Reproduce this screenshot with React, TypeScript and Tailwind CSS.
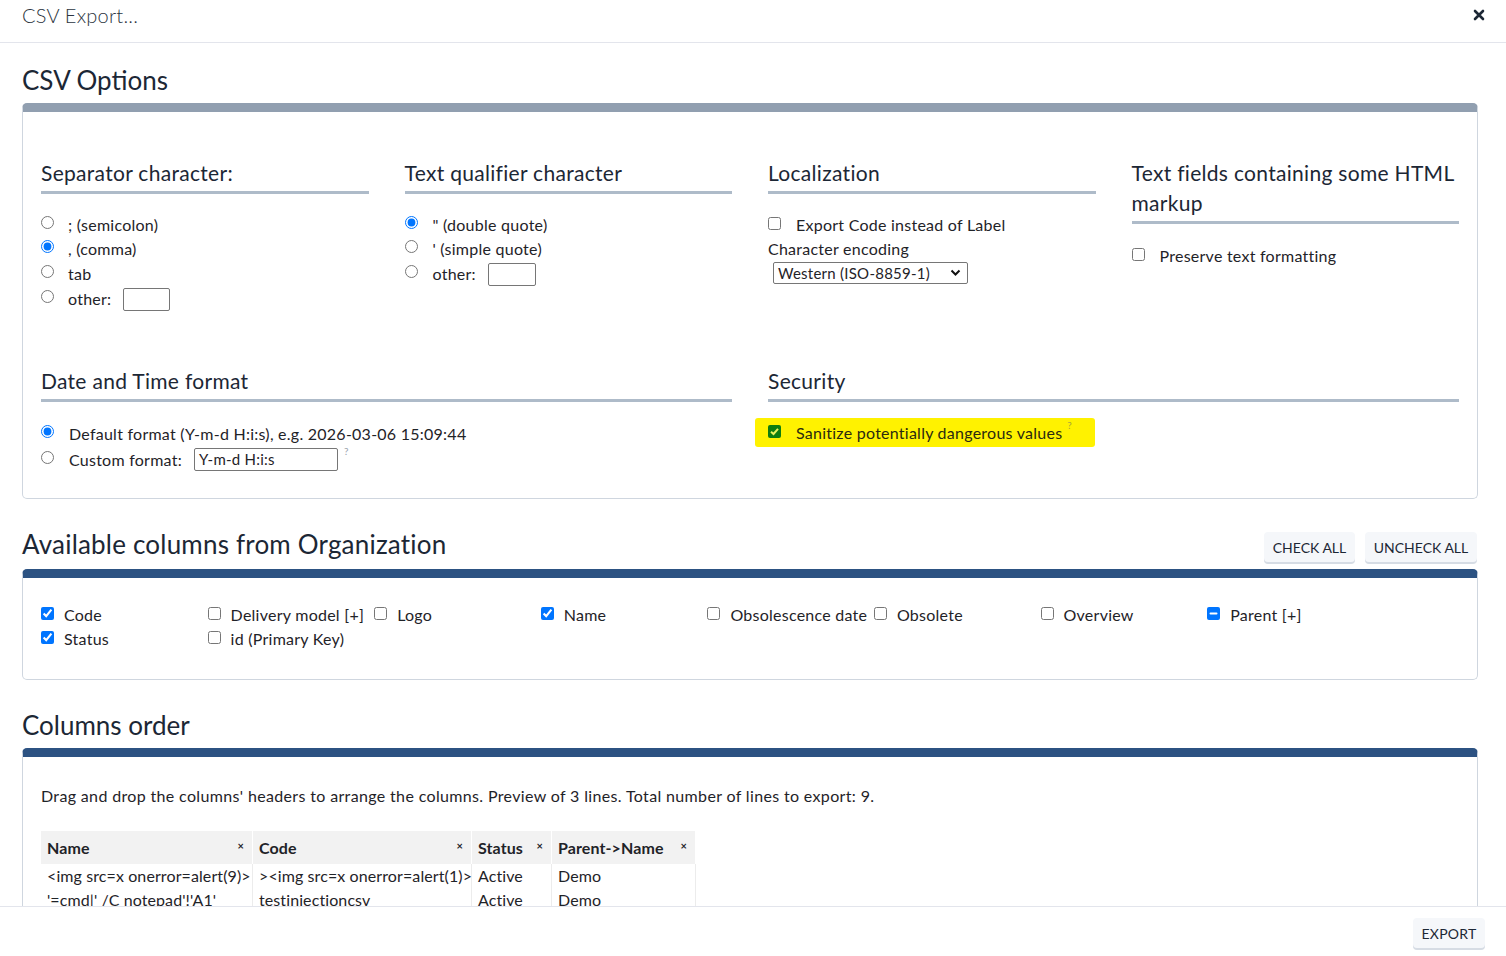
import React, { useEffect, useRef } from "react";

const FONT = { fontFamily: "Lato, 'Open Sans', sans-serif" };

function Radio({ checked }: { checked?: boolean }) {
  return (
    <input
      type="radio"
      defaultChecked={checked}
      className="m-0 w-[13px] h-[13px] mb-[5px] shrink-0"
      readOnly
    />
  );
}

function Check({ checked, indeterminate }: { checked?: boolean; indeterminate?: boolean }) {
  const ref = useRef<HTMLInputElement>(null);
  useEffect(() => {
    if (ref.current && indeterminate) ref.current.indeterminate = true;
  }, [indeterminate]);
  return (
    <input
      ref={ref}
      type="checkbox"
      defaultChecked={checked}
      className="m-0 w-[13px] h-[13px] mb-[3px] shrink-0"
    />
  );
}

function Heading({ children }: { children: React.ReactNode }) {
  return (
    <div className="text-[21px] tracking-[0.3px] leading-[30px] pb-[3px] border-b-[3px] border-[#aebbc9] text-[#1c2735]">
      {children}
    </div>
  );
}

function TextBox({ w, value }: { w: string; value?: string }) {
  return (
    <span
      className={`inline-flex items-center h-[23px] border border-[#767676] rounded-[2px] px-[4px] text-[15px] ${w}`}
    >
      {value}
    </span>
  );
}

const columns: { label: string; checked?: boolean; ind?: boolean }[] = [
  { label: "Code", checked: true },
  { label: "Delivery model [+]" },
  { label: "Logo" },
  { label: "Name", checked: true },
  { label: "Obsolescence date" },
  { label: "Obsolete" },
  { label: "Overview" },
  { label: "Parent [+]", ind: true },
  { label: "Status", checked: true },
  { label: "id (Primary Key)" },
];

function HeadCell({ label, w }: { label: string; w: string }) {
  return (
    <div className={`${w} h-[33px] flex items-center justify-between px-[6px] bg-[#f2f2f2] border-r border-white font-bold`}>
      <span>{label}</span>
      <span className="text-[11px] font-bold mr-[2px] mb-[2px]">×</span>
    </div>
  );
}

export default function App() {
  return (
    <div className="h-screen flex flex-col bg-white text-[#1f2328] text-[16px] tracking-[0.25px] overflow-hidden" style={FONT}>
      <header className="h-[43px] shrink-0 border-b border-[#e3e5ec] flex items-start justify-between pl-[22px] pr-[21px] pt-[2px]">
        <span className="text-[20px] leading-[26px] font-light text-[#2b3440]">CSV Export...</span>
        <svg width="12" height="12" viewBox="0 0 12 12" className="mt-[7px]">
          <path d="M2 2 L10 10 M10 2 L2 10" stroke="#1c2735" strokeWidth="2.6" strokeLinecap="round" />
        </svg>
      </header>

      <main className="flex-1 overflow-hidden pl-[22px] pr-[28px]">
        <h2 className="text-[26px] leading-[34px] tracking-[0px] mt-[20px] mb-[6px] text-[#1c2735]">CSV Options</h2>

        <section className="border border-[#cfd6df] border-t-[9px] border-t-[#919fb0] rounded-[5px] pt-[46px] pb-[25px] px-[18px]">
          <div className="grid grid-cols-4 gap-x-[36px]">
            <div className="h-[208px]">
              <Heading>Separator character:</Heading>
              <div className="mt-[19px]">
                <label className="flex items-center gap-[14px] h-[24px]"><Radio /> ; (semicolon)</label>
                <label className="flex items-center gap-[14px] h-[24px]"><Radio checked /> , (comma)</label>
                <label className="flex items-center gap-[14px] h-[25px]"><Radio /> tab</label>
                <label className="flex items-center gap-[14px] h-[26px]"><Radio /> <span className="flex items-center gap-[12px]">other: <TextBox w="w-[47px]" /></span></label>
              </div>
            </div>
            <div className="h-[208px]">
              <Heading>Text qualifier character</Heading>
              <div className="mt-[19px]">
                <label className="flex items-center gap-[15px] h-[24px]"><Radio checked /> " (double quote)</label>
                <label className="flex items-center gap-[15px] h-[24px]"><Radio /> ' (simple quote)</label>
                <label className="flex items-center gap-[15px] h-[26px]"><Radio /> <span className="flex items-center gap-[12px]">other: <TextBox w="w-[48px]" /></span></label>
              </div>
            </div>
            <div className="h-[208px]">
              <Heading>Localization</Heading>
              <div className="mt-[19px]">
                <label className="flex items-center gap-[15px] h-[24px]"><Check /> Export Code instead of Label</label>
                <div className="h-[23px] leading-[23px]">Character encoding</div>
                <div className="ml-[5px] mt-[2px] w-[195px] h-[22px] border border-[#767676] rounded-[2px] flex items-center justify-between pl-[4px] pr-[6px] text-[15px]">
                  <span>Western (ISO-8859-1)</span>
                  <svg width="11" height="8" viewBox="0 0 11 8">
                    <path d="M1.5 1.5 L5.5 5.5 L9.5 1.5" stroke="#111" strokeWidth="2" fill="none" />
                  </svg>
                </div>
              </div>
            </div>
            <div className="h-[208px]">
              <Heading>Text fields containing some HTML markup</Heading>
              <div className="mt-[20px]">
                <label className="flex items-center gap-[15px] h-[24px]"><Check /> Preserve text formatting</label>
              </div>
            </div>

            <div className="col-span-2">
              <Heading>Date and Time format</Heading>
              <div className="mt-[20px]">
                <label className="flex items-center gap-[15px] h-[24px]"><Radio checked /> Default format (Y-m-d H:i:s), e.g. 2026-03-06 15:09:44</label>
                <label className="flex items-center gap-[15px] h-[27px]">
                  <Radio />
                  <span className="flex items-center gap-[12px]">Custom format: <TextBox w="w-[144px]" value="Y-m-d H:i:s" /></span>
                  <sup className="text-[10px] text-[#9aa3ad] -ml-[9px] -mt-[8px]">?</sup>
                </label>
              </div>
            </div>
            <div className="col-span-2">
              <Heading>Security</Heading>
              <div className="mt-[16px]">
                <div className="-ml-[13px] w-[340px] h-[29px] bg-[#fff200] rounded-[3px] flex items-center gap-[15px] pl-[13px]">
                  <span className="w-[13px] h-[13px] rounded-[2px] bg-[#0e7d10] flex items-center justify-center mb-[3px]">
                    <svg width="11" height="11" viewBox="0 0 11 11">
                      <path d="M2 5.8 L4.5 8 L9 2.8" stroke="#e9f25c" strokeWidth="2" fill="none" />
                    </svg>
                  </span>
                  <span className="text-[#2a2a10]">Sanitize potentially dangerous values</span>
                  <sup className="text-[10px] text-[#a9a83a] -ml-[10px] -mt-[6px]">?</sup>
                </div>
              </div>
            </div>
          </div>
        </section>

        <div className="flex items-center justify-between h-[40px] mt-[25px] mb-[5px] pr-[1px]">
          <h2 className="text-[26px] leading-[34px] tracking-[0.2px] text-[#1c2735]">Available columns from Organization</h2>
          <div className="flex gap-[10px] mt-[6px] tracking-[0px]">
            <button className="h-[30px] w-[91px] rounded-[4px] bg-[#f5f7fa] text-[14px] text-[#1c2735] shadow-[0_2px_0_#d6dce4]">CHECK ALL</button>
            <button className="h-[30px] w-[112px] rounded-[4px] bg-[#f5f7fa] text-[14px] text-[#1c2735] shadow-[0_2px_0_#d6dce4]">UNCHECK ALL</button>
          </div>
        </div>

        <section className="border border-[#cfd6df] border-t-[9px] border-t-[#2c5282] rounded-[5px] pt-[25px] pb-[28px] px-[18px]">
          <div className="flex flex-wrap">
            {columns.map((c) => (
              <label key={c.label} className="w-[166.6px] flex items-center gap-[10px] h-[24px] whitespace-nowrap">
                <Check checked={c.checked} indeterminate={c.ind} />
                {c.label}
              </label>
            ))}
          </div>
        </section>

        <h2 className="text-[26px] leading-[34px] tracking-[0px] mt-[28px] mb-[6px] text-[#1c2735]">Columns order</h2>

        <section className="border border-[#cfd6df] border-t-[9px] border-t-[#2c5282] rounded-[5px] pt-[27px] pb-[28px] px-[18px]">
          <p className="leading-[24px] mb-[23px] tracking-[0.35px]">
            Drag and drop the columns' headers to arrange the columns. Preview of 3 lines. Total number of lines to export: 9.
          </p>
          <div className="inline-flex flex-col tracking-[0.1px]">
            <div className="flex">
              <HeadCell label="Name" w="w-[212px]" />
              <HeadCell label="Code" w="w-[219px]" />
              <HeadCell label="Status" w="w-[80px]" />
              <HeadCell label="Parent->Name" w="w-[144px]" />
            </div>
            {[
              ["<img src=x onerror=alert(9)>", "><img src=x onerror=alert(1)>", "Active", "Demo"],
              ["'=cmd|' /C notepad'!'A1'", "testinjectioncsv", "Active", "Demo"],
            ].map((r, i) => (
              <div key={i} className="flex h-[24px] leading-[24px] whitespace-nowrap">
                <div className="w-[212px] px-[6px] border-r border-[#ececec]">{r[0]}</div>
                <div className="w-[219px] px-[6px] border-r border-[#ececec]">{r[1]}</div>
                <div className="w-[80px] px-[6px] border-r border-[#ececec]">{r[2]}</div>
                <div className="w-[144px] px-[6px] border-r border-[#ececec]">{r[3]}</div>
              </div>
            ))}
          </div>
        </section>
      </main>

      <footer className="h-[50px] shrink-0 border-t border-[#e3e5ec] flex items-start justify-end pr-[21px] pt-[11px] bg-white">
        <button className="h-[30px] w-[72px] rounded-[4px] bg-[#f5f7fa] text-[14px] text-[#1c2735] shadow-[0_2px_0_#d6dce4]">EXPORT</button>
      </footer>
    </div>
  );
}
